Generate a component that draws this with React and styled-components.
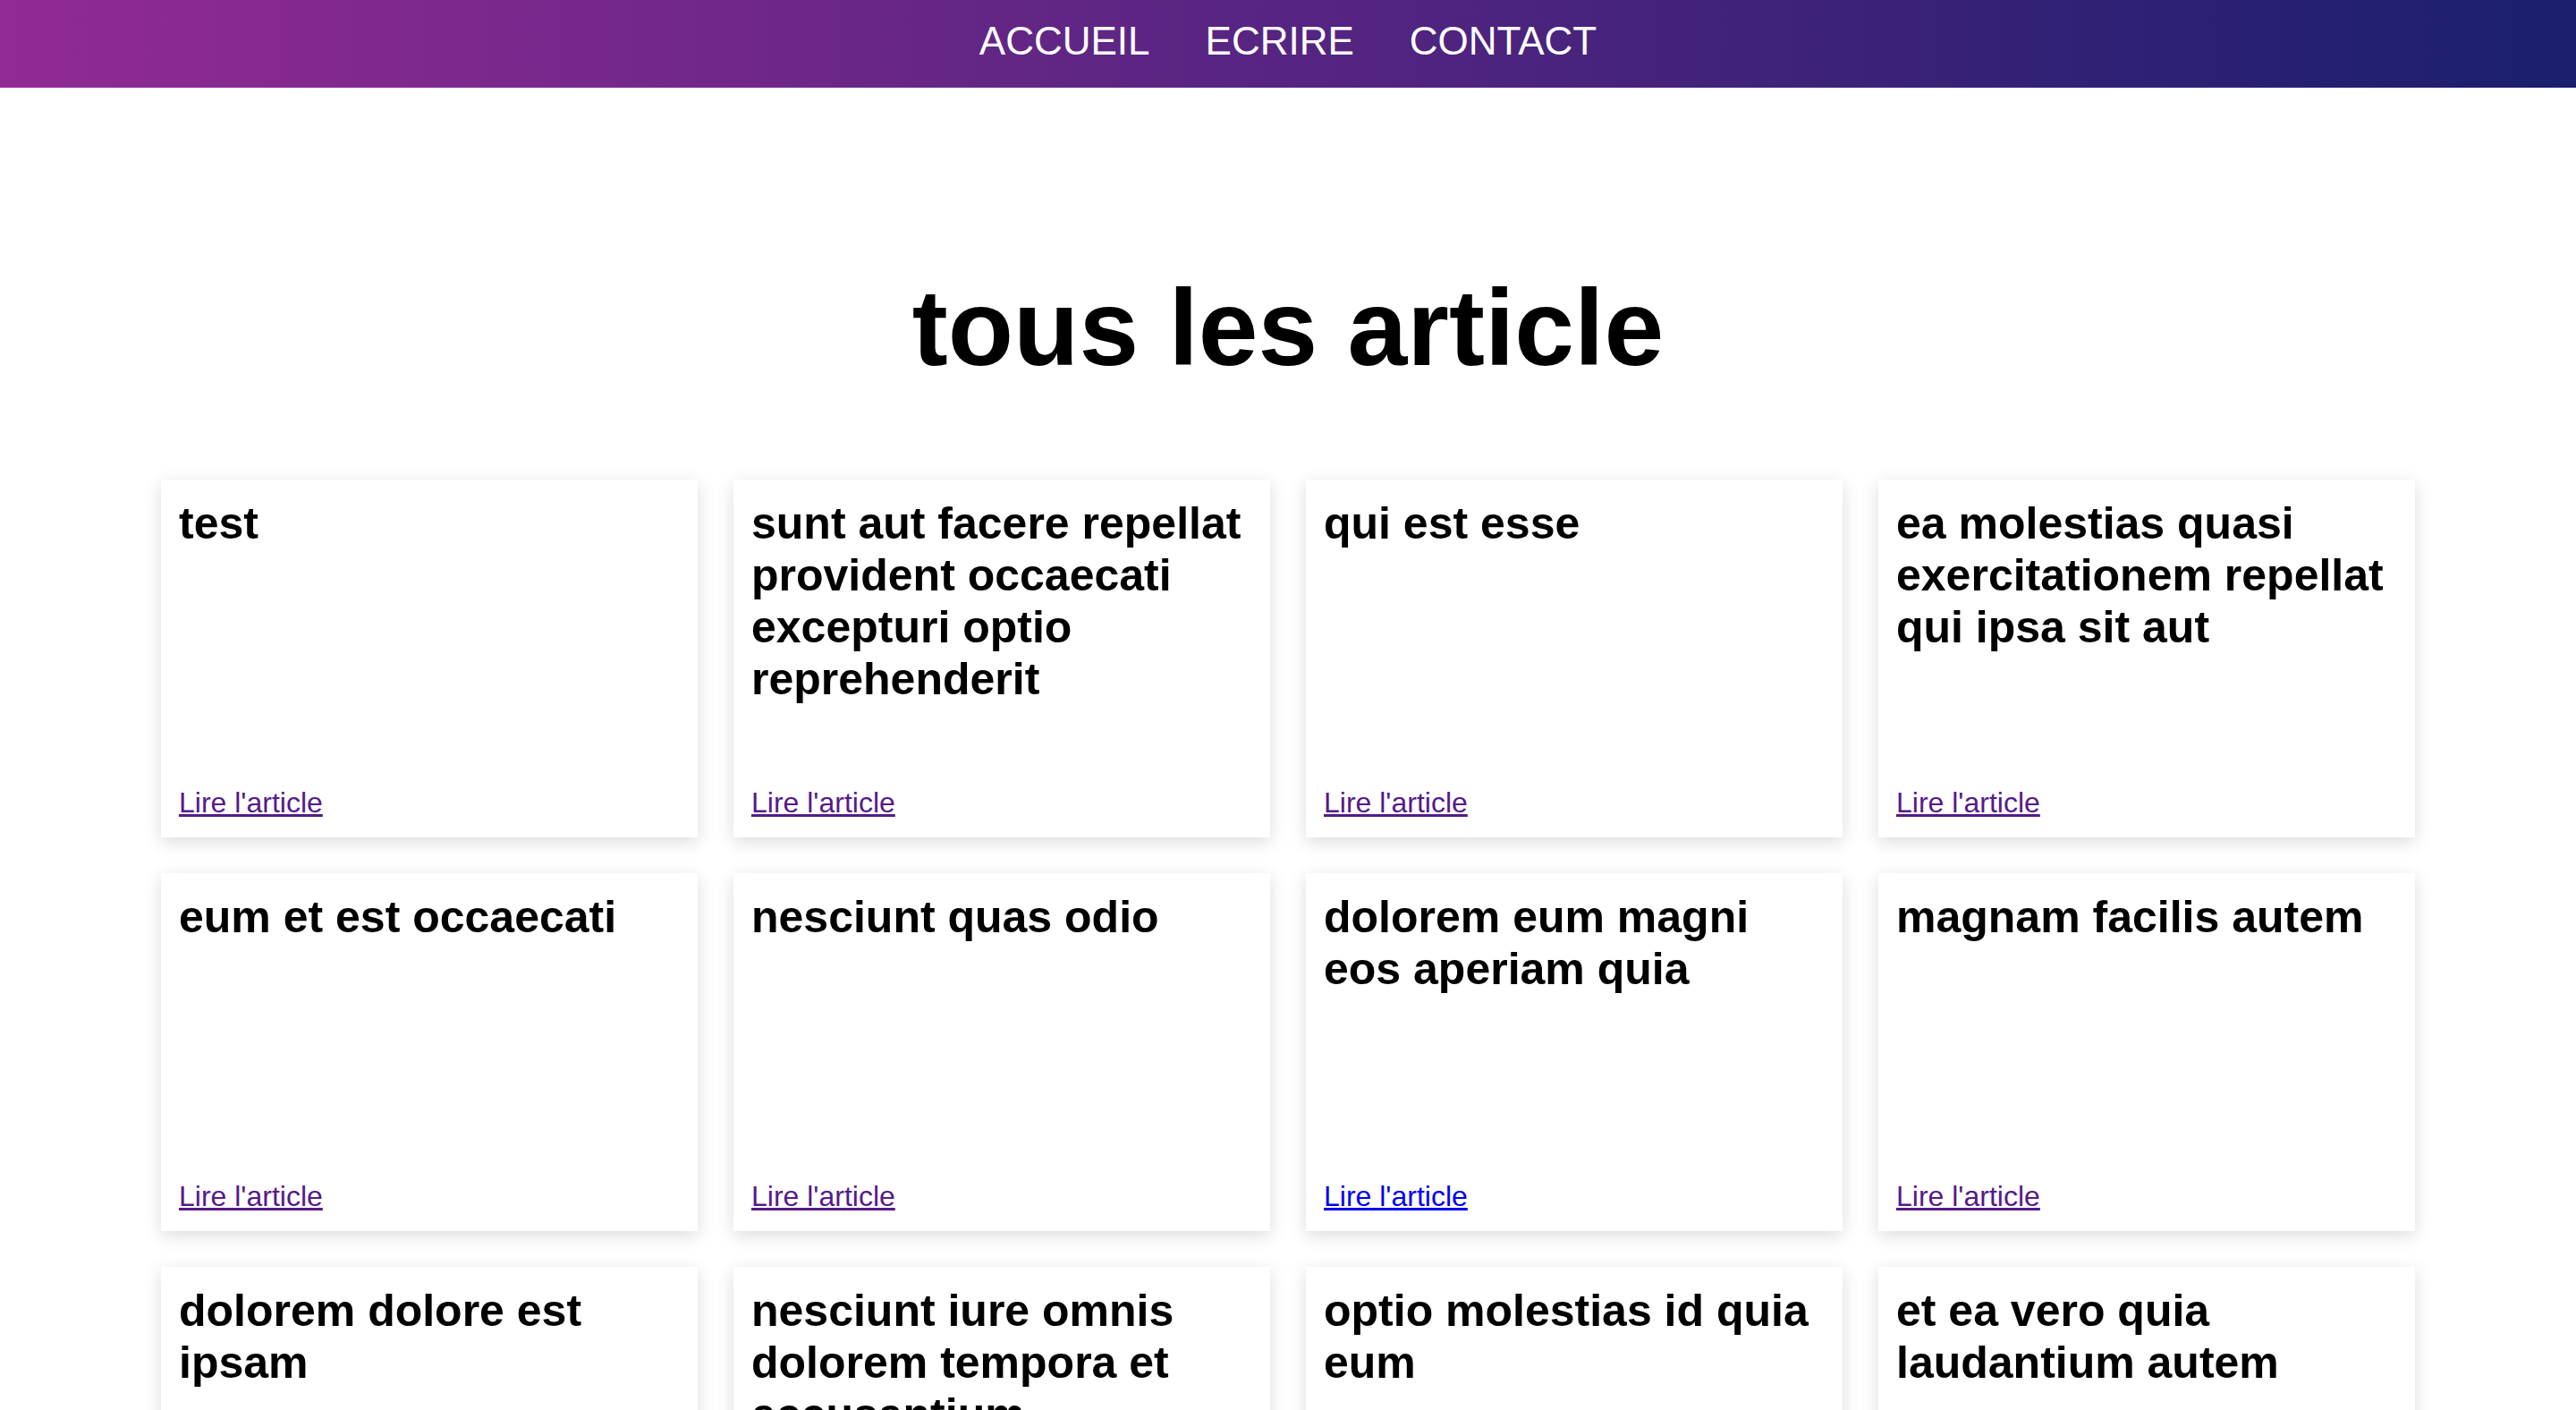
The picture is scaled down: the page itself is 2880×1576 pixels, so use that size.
import React from "react";
import styled, { createGlobalStyle } from "styled-components";

const GlobalStyle = createGlobalStyle`
  * { box-sizing: border-box; }
  html, body { margin: 0; padding: 0; background: #ffffff; }
  body { font-family: "Liberation Sans", Arial, Helvetica, sans-serif; color: #000; }
`;

const Header = styled.header`
  height: 98px;
  background: linear-gradient(to right, #922a94, #1a1f6e);
  display: flex;
  justify-content: center;
  align-items: flex-start;
  padding-top: 21px;
`;

const Nav = styled.nav`
  display: flex;
  gap: 62px;
`;

const NavLink = styled.a`
  color: #ffffff;
  text-decoration: none;
  font-size: 44px;
  line-height: normal;
  text-transform: uppercase;
`;

const Main = styled.main`
  padding: 0 180px 60px;
`;

const Title = styled.h1`
  margin: 199px 0 101px;
  text-align: center;
  font-size: 120px;
  font-weight: 700;
  line-height: normal;
`;

const Grid = styled.div`
  display: grid;
  grid-template-columns: repeat(4, 600px);
  gap: 40px;
  justify-content: center;
`;

const Card = styled.article`
  height: 400px;
  background: #fff;
  padding: 20px;
  box-shadow: 0 5px 18px rgba(0, 0, 0, 0.14);
  display: flex;
  flex-direction: column;
  justify-content: space-between;
`;

const CardTitle = styled.h2`
  margin: 0;
  font-size: 50px;
  font-weight: 700;
  line-height: normal;
`;

const ReadLink = styled.a`
  font-size: 32px;
  line-height: normal;
  color: ${(p) => (p.$visited ? "#551a8b" : "#0000ee")};
  text-decoration: underline;
  align-self: flex-start;
`;

const posts = [
  { id: 101, title: "test", visited: true },
  { id: 1, title: "sunt aut facere repellat provident occaecati excepturi optio reprehenderit", visited: true },
  { id: 2, title: "qui est esse", visited: true },
  { id: 3, title: "ea molestias quasi exercitationem repellat qui ipsa sit aut", visited: true },
  { id: 4, title: "eum et est occaecati", visited: true },
  { id: 5, title: "nesciunt quas odio", visited: true },
  { id: 6, title: "dolorem eum magni eos aperiam quia", visited: false },
  { id: 7, title: "magnam facilis autem", visited: true },
  { id: 8, title: "dolorem dolore est ipsam", visited: true },
  { id: 9, title: "nesciunt iure omnis dolorem tempora et accusantium", visited: true },
  { id: 10, title: "optio molestias id quia eum", visited: true },
  { id: 11, title: "et ea vero quia laudantium autem", visited: true },
];

export default function App() {
  return (
    <>
      <GlobalStyle />
      <Header>
        <Nav>
          <NavLink href="#">Accueil</NavLink>
          <NavLink href="#">Ecrire</NavLink>
          <NavLink href="#">Contact</NavLink>
        </Nav>
      </Header>
      <Main>
        <Title>tous les article</Title>
        <Grid>
          {posts.map((p) => (
            <Card key={p.id}>
              <CardTitle>{p.title}</CardTitle>
              <ReadLink href="#" $visited={p.visited}>
                Lire l'article
              </ReadLink>
            </Card>
          ))}
        </Grid>
      </Main>
    </>
  );
}
